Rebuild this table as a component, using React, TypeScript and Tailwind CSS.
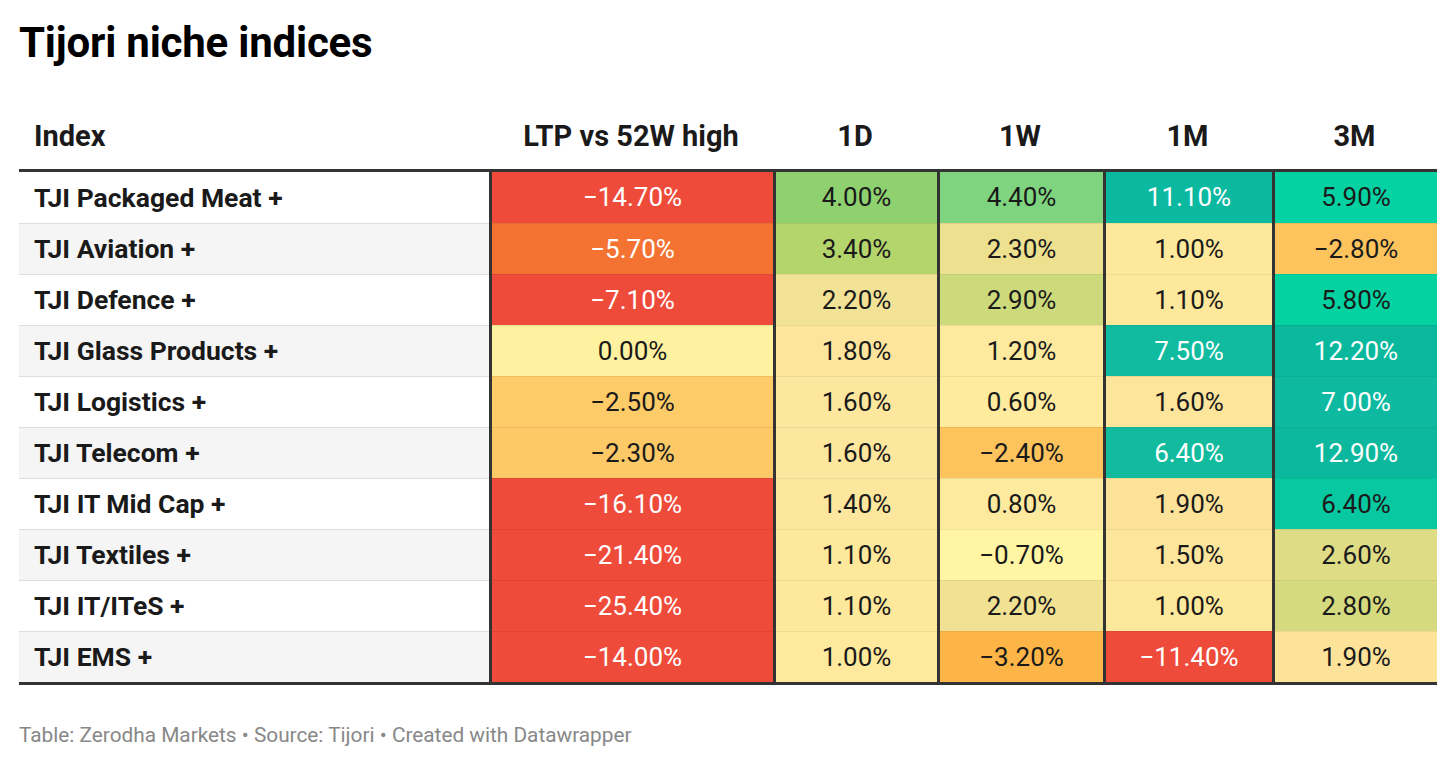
const rows = [
  { name: "TJI Packaged Meat +", cells: [["−14.70%", "#ee4b3b", 1], ["4.00%", "#8fd16f", 0], ["4.40%", "#7fd57f", 0], ["11.10%", "#0bb9a0", 1], ["5.90%", "#05d2a2", 0]] },
  { name: "TJI Aviation +", cells: [["−5.70%", "#f47333", 1], ["3.40%", "#b4d56c", 0], ["2.30%", "#ede08f", 0], ["1.00%", "#fee89b", 0], ["−2.80%", "#fdc45e", 0]] },
  { name: "TJI Defence +", cells: [["−7.10%", "#ee4b3b", 1], ["2.20%", "#f1e296", 0], ["2.90%", "#cdda7c", 0], ["1.10%", "#fee89b", 0], ["5.80%", "#04d2a1", 0]] },
  { name: "TJI Glass Products +", cells: [["0.00%", "#fef2a0", 0], ["1.80%", "#fde59d", 0], ["1.20%", "#feea9e", 0], ["7.50%", "#10bb9f", 1], ["12.20%", "#0ab89d", 1]] },
  { name: "TJI Logistics +", cells: [["−2.50%", "#fdcb68", 0], ["1.60%", "#fde69d", 0], ["0.60%", "#ffeb9d", 0], ["1.60%", "#fde59c", 0], ["7.00%", "#0db9a0", 1]] },
  { name: "TJI Telecom +", cells: [["−2.30%", "#fdc866", 0], ["1.60%", "#fde69d", 0], ["−2.40%", "#fdc35c", 0], ["6.40%", "#12bb9e", 1], ["12.90%", "#0cb89d", 1]] },
  { name: "TJI IT Mid Cap +", cells: [["−16.10%", "#ee4b3b", 1], ["1.40%", "#fde69d", 0], ["0.80%", "#feea9e", 0], ["1.90%", "#fde39a", 0], ["6.40%", "#07c8a0", 0]] },
  { name: "TJI Textiles +", cells: [["−21.40%", "#ee4b3b", 1], ["1.10%", "#fee89b", 0], ["−0.70%", "#fff5a3", 0], ["1.50%", "#fde59c", 0], ["2.60%", "#dfdc86", 0]] },
  { name: "TJI IT/ITeS +", cells: [["−25.40%", "#ee4b3b", 1], ["1.10%", "#fee89b", 0], ["2.20%", "#f1e293", 0], ["1.00%", "#fee89b", 0], ["2.80%", "#d5da7e", 0]] },
  { name: "TJI EMS +", cells: [["−14.00%", "#ee4b3b", 1], ["1.00%", "#fee99c", 0], ["−3.20%", "#fdb548", 0], ["−11.40%", "#ee4b3b", 1], ["1.90%", "#fde39a", 0]] },
] as const;

const headers = ["LTP vs 52W high", "1D", "1W", "1M", "3M"];

const cols = "grid grid-cols-[470px_284px_164px_166px_169px_165px]";

export default function App() {
  return (
    <div className="min-h-screen bg-white px-[19px] pt-[18px] font-['Roboto',sans-serif] text-[#1a1a1a]">
      <h1 className="text-[42px] font-bold leading-[50px] tracking-[-0.2px] text-black">Tijori niche indices</h1>

      <div className="mt-[36px] w-[1418px]">
        {/* header */}
        <div className={`${cols} h-[68px] items-center border-b-[3px] border-[#333] text-[29px] font-bold text-[#1a1a1a]`}>
          <div className="pl-[15px]">Index</div>
          {headers.map((h) => (
            <div key={h} className="text-center">{h}</div>
          ))}
        </div>

        {/* body */}
        <div className="border-b-[3px] border-[#333]">
          {rows.map((row, i) => (
            <div key={row.name} className={`${cols} h-[51px]`}>
              <div
                className={`flex items-center pl-[15px] text-[26.5px] font-bold ${i > 0 ? "border-t border-[#dddddd]" : ""} ${i % 2 === 1 ? "bg-[#f5f5f5]" : "bg-white"}`}
              >
                {row.name}
              </div>
              {row.cells.map(([v, bg, light], j) => (
                <div key={j} className="flex border-l-[3px] border-[#333]">
                  <div
                    className={`flex flex-1 items-center justify-center text-[26px] ${i > 0 ? "border-t border-black/[0.06]" : ""} ${light ? "text-white" : "text-[#1a1a1a]"}`}
                    style={{ backgroundColor: bg }}
                  >
                    {v}
                  </div>
                </div>
              ))}
            </div>
          ))}
        </div>
      </div>

      <p className="mt-[35px] text-[20.8px] text-[#888888]">
        Table: Zerodha Markets • Source: Tijori • Created with Datawrapper
      </p>
    </div>
  );
}
